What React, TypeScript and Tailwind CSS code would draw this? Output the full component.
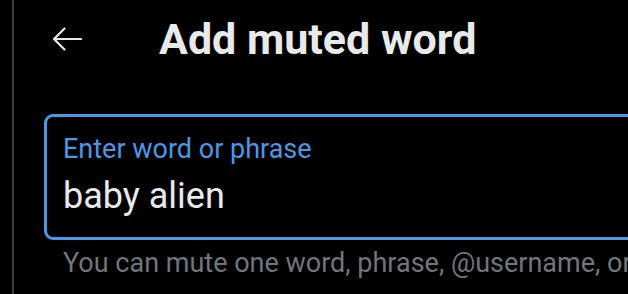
import React from "react";

function BackArrow() {
  return (
    <svg width="30" height="24" viewBox="0 0 30 24" fill="none">
      <path
        d="M29 12H2 M12.5 1.5 L2 12 L12.5 22.5"
        stroke="#e7e9ea"
        strokeWidth="2.2"
        strokeLinecap="round"
        strokeLinejoin="round"
      />
    </svg>
  );
}

export default function App() {
  return (
    <div
      className="w-[628px] h-[294px] bg-black flex overflow-hidden"
      style={{ fontFamily: "Roboto, 'Liberation Sans', sans-serif" }}
    >
      <div className="w-[12px] shrink-0" />
      <div className="w-[2px] shrink-0 bg-[#3a3c3f]" />
      <div className="flex-1 pl-[30px] flex flex-col min-w-0">
        <header className="h-[78px] flex items-center shrink-0">
          <button className="ml-[8px] flex items-center">
            <BackArrow />
          </button>
          <h1 className="ml-[77px] text-[43px] leading-[50px] font-bold text-[#e7e9ea] whitespace-nowrap">
            Add muted word
          </h1>
        </header>
        <div className="mt-[36px] w-[640px] shrink-0 rounded-[9px] border-[3px] border-[#4a99e8] pl-[16px] pt-[16px] pb-[20px]">
          <div className="text-[27px] leading-[32px] text-[#4a99e8] whitespace-nowrap">
            Enter word or phrase
          </div>
          <div className="mt-[10px] text-[36px] leading-[42px] text-[#e7e9ea] whitespace-nowrap">
            baby alien
          </div>
        </div>
        <p className="mt-[7px] pl-[19px] text-[27px] leading-[32px] text-[#71767b] whitespace-nowrap">
          You can mute one word, phrase, @username, or hashtag at a time.
        </p>
      </div>
    </div>
  );
}
